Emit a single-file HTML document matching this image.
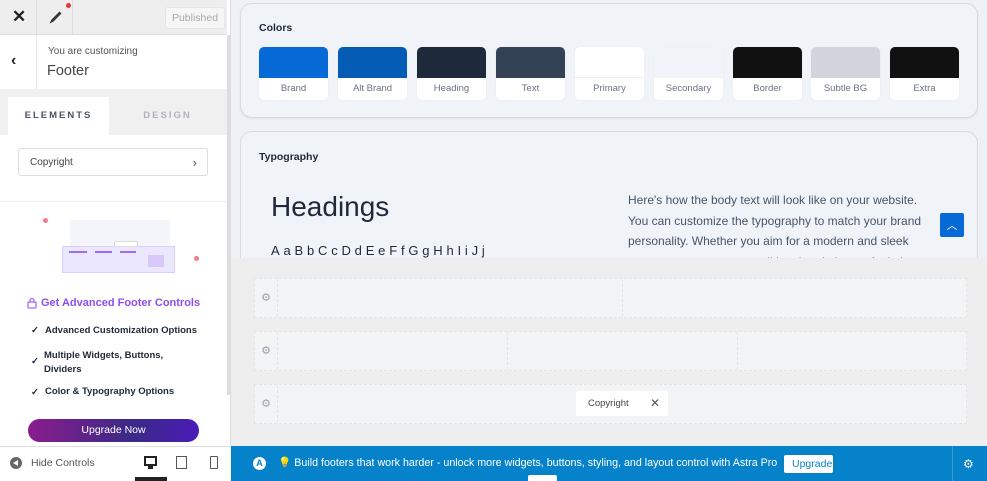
<!DOCTYPE html>
<html><head><style>
*{box-sizing:border-box;margin:0;padding:0}
body{width:987px;height:481px;overflow:hidden;font-family:"Liberation Sans",sans-serif;background:#eef1f5;position:relative}
.abs{position:absolute}
.sw{position:absolute;top:47px;width:69px;height:53px;background:#fff;border-radius:5px;overflow:hidden;box-shadow:0 0 1px rgba(0,0,0,.08)}
.sw div{height:31px}
.sw span{display:block;text-align:center;font-size:9.5px;color:#6b7280;line-height:22px}
.row{position:absolute;left:254px;width:713px;height:40px;background:#f3f4f6;border:1px dashed #e3e4e7}
.gear{position:absolute;left:0;top:0;width:23px;height:38px;border-right:1px dashed #e3e4e7;color:#9ca3af;font-size:11px;text-align:center;line-height:38px}
.chk{position:absolute;left:30px;font-size:9.5px;font-weight:bold;color:#1f2937;line-height:14px}
</style></head><body>
<div class="abs" style="left:0;top:0;width:231px;height:481px;background:#fff;border-right:1px solid #ddd"></div>
<div class="abs" style="left:0;top:0;width:227px;height:35px;background:#eeeeee;border-bottom:1px solid #ddd"></div>
<div class="abs" style="left:12px;top:7px;font-size:17px;color:#222;font-weight:bold">✕</div>
<div class="abs" style="left:36px;top:0;width:1px;height:35px;background:#ddd"></div>
<div class="abs" style="left:72px;top:0;width:1px;height:35px;background:#ddd"></div>
<svg class="abs" style="left:48px;top:9px" width="16" height="16" viewBox="0 0 16 16"><path d="M3 13l2-1 7-7-1-1-7 7z M11 3l2 2" stroke="#333" stroke-width="1.4" fill="none"/></svg>
<div class="abs" style="left:66px;top:3px;width:5px;height:5px;border-radius:50%;background:#e53935"></div>
<div class="abs" style="left:165px;top:7px;width:60px;height:22px;border:1px solid #e5e5e5;border-radius:3px;background:#f6f6f6;color:#a8a8a8;font-size:10.5px;text-align:center;line-height:20px">Published</div>
<div class="abs" style="left:36px;top:35px;width:1px;height:54px;background:#e5e5e5"></div>
<div class="abs" style="left:11px;top:52px;font-size:16px;font-weight:bold;color:#222">‹</div>
<div class="abs" style="left:48px;top:46px;font-size:10px;color:#555">You are customizing</div>
<div class="abs" style="left:47px;top:63px;font-size:14.5px;color:#444">Footer</div>
<div class="abs" style="left:0;top:89px;width:227px;height:46px;background:#f0f0f1"></div>
<div class="abs" style="left:8px;top:97px;width:101px;height:38px;background:#fff;text-align:center;line-height:38px;font-size:9.5px;letter-spacing:2px;font-weight:bold;color:#4b5563">ELEMENTS</div>
<div class="abs" style="left:110px;top:97px;width:115px;height:38px;text-align:center;line-height:38px;font-size:9.5px;letter-spacing:2px;font-weight:bold;color:#b0b4bb">DESIGN</div>
<div class="abs" style="left:18px;top:148px;width:190px;height:28px;border:1px solid #ddd;border-radius:3px;font-size:10px;color:#444;padding-left:11px;line-height:28px">Copyright<span style="position:absolute;right:10px;top:0;color:#555;font-size:13px">›</span></div>
<div class="abs" style="left:0;top:201px;width:227px;height:1px;background:#eee"></div>
<div class="abs" style="left:43px;top:218px;width:5px;height:5px;border-radius:50%;background:#f47d8b"></div>
<div class="abs" style="left:194px;top:256px;width:5px;height:5px;border-radius:50%;background:#f47d8b"></div>
<div class="abs" style="left:70px;top:220px;width:100px;height:30px;background:#f4f4fb"></div>
<div class="abs" style="left:62px;top:246px;width:113px;height:27px;background:#ebe7fd;border:1px solid #d7cffa"></div>
<div class="abs" style="left:69px;top:251px;width:18px;height:2px;background:#9d6cf0"></div>
<div class="abs" style="left:95px;top:251px;width:17px;height:2px;background:#9d6cf0"></div>
<div class="abs" style="left:120px;top:251px;width:16px;height:2px;background:#9d6cf0"></div>
<div class="abs" style="left:148px;top:255px;width:16px;height:12px;background:#d8c8fa"></div>
<div class="abs" style="left:114px;top:241px;width:24px;height:6px;background:#fff;border:1px solid #ddd"></div>
<svg class="abs" style="left:27px;top:297px" width="10" height="12" viewBox="0 0 10 12"><rect x="1" y="5" width="8" height="6" rx="1" fill="none" stroke="#a46af2" stroke-width="1.3"/><path d="M3 5V3.5a2 2 0 014 0V5" fill="none" stroke="#a46af2" stroke-width="1.3"/></svg>
<div class="abs" style="left:41px;top:297px;font-size:11px;color:#8e4ef0;font-weight:bold">Get Advanced Footer Controls</div>
<div class="chk" style="left:31px;top:324px">✓</div><div class="abs" style="left:45px;top:325px;font-size:9.5px;font-weight:bold;color:#1f2937">Advanced Customization Options</div>
<div class="chk" style="left:31px;top:355px">✓</div><div class="abs" style="left:44px;top:349px;font-size:9.5px;font-weight:bold;color:#1f2937;line-height:14px">Multiple Widgets, Buttons,<br>Dividers</div>
<div class="chk" style="left:31px;top:386px">✓</div><div class="abs" style="left:45px;top:386px;font-size:9.5px;font-weight:bold;color:#1f2937">Color &amp; Typography Options</div>
<div class="abs" style="left:28px;top:419px;width:171px;height:23px;border-radius:12px;background:linear-gradient(90deg,#8b1c8c,#3b2a86 60%,#4a1bb8);color:#fff;font-size:10.5px;text-align:center;line-height:23px">Upgrade Now</div>
<div class="abs" style="left:227px;top:35px;width:4px;height:360px;background:#ddd"></div>
<div class="abs" style="left:0;top:446px;width:231px;height:35px;background:#fff;border-top:1px solid #ddd"></div>
<div class="abs" style="left:10px;top:457px;width:12px;height:12px;border-radius:50%;background:#666"></div>
<div class="abs" style="left:13px;top:460px;width:0;height:0;border-top:3px solid transparent;border-bottom:3px solid transparent;border-right:5px solid #fff"></div>
<div class="abs" style="left:31px;top:457px;font-size:10.5px;color:#555">Hide Controls</div>
<div class="abs" style="left:144px;top:456px;width:13px;height:10px;border:2px solid #222"></div><div class="abs" style="left:148px;top:466px;width:5px;height:3px;background:#222"></div>
<div class="abs" style="left:176px;top:456px;width:11px;height:13px;border:1.5px solid #555"></div>
<div class="abs" style="left:210px;top:456px;width:8px;height:13px;border:1.5px solid #555;border-radius:1px"></div>
<div class="abs" style="left:135px;top:477px;width:32px;height:4px;background:#222"></div>
<div class="abs" style="left:240px;top:3px;width:738px;height:115px;border:1px solid #d6dbe1;border-radius:12px;background:#f0f4f8;box-shadow:0 1px 2px rgba(0,0,0,.06)"></div>
<div class="abs" style="left:259px;top:22px;font-size:10.5px;font-weight:bold;color:#1f2937">Colors</div>
<div class="sw" style="left:259px"><div style="background:#0769d6"></div><span>Brand</span></div>
<div class="sw" style="left:338px"><div style="background:#045cb4"></div><span>Alt Brand</span></div>
<div class="sw" style="left:417px"><div style="background:#1e293b"></div><span>Heading</span></div>
<div class="sw" style="left:496px"><div style="background:#334155"></div><span>Text</span></div>
<div class="sw" style="left:575px"><div style="background:#fff;border-bottom:1px solid #eee"></div><span>Primary</span></div>
<div class="sw" style="left:654px"><div style="background:#f0f4f8"></div><span>Secondary</span></div>
<div class="sw" style="left:733px"><div style="background:#111"></div><span>Border</span></div>
<div class="sw" style="left:811px"><div style="background:#d1d5db"></div><span>Subtle BG</span></div>
<div class="sw" style="left:890px"><div style="background:#111"></div><span>Extra</span></div>
<div class="abs" style="left:240px;top:131px;width:738px;height:160px;border:1px solid #d6dbe1;border-radius:12px;background:#f0f4f8"></div>
<div class="abs" style="left:259px;top:151px;font-size:10.5px;font-weight:bold;color:#1f2937">Typography</div>
<div class="abs" style="left:271px;top:191px;font-size:28px;color:#1e293b">Headings</div>
<div class="abs" style="left:271px;top:243px;font-size:13px;letter-spacing:3.8px;color:#1e293b">AaBbCcDdEeFfGgHhIiJj</div>
<div class="abs" style="left:628px;top:190px;width:308px;font-size:12px;line-height:20.5px;color:#475569">Here's how the body text will look like on your website. You can customize the typography to match your brand personality. Whether you aim for a modern and sleek appearance or a more traditional and elegant feel, the</div>
<div class="abs" style="left:940px;top:213px;width:24px;height:24px;background:#0769d6;border-radius:2px;color:#fff;text-align:center;line-height:26px;font-size:11px">︿</div>
<div class="abs" style="left:231px;top:258px;width:756px;height:188px;background:#eeeeee"></div>
<div class="row" style="top:278px"><div class="gear">⚙</div><div class="abs" style="left:367px;top:0;width:1px;height:38px;border-left:1px dashed #e3e4e7"></div></div>
<div class="row" style="top:331px"><div class="gear">⚙</div><div class="abs" style="left:252px;top:0;height:38px;border-left:1px dashed #e3e4e7"></div><div class="abs" style="left:482px;top:0;height:38px;border-left:1px dashed #e3e4e7"></div></div>
<div class="row" style="top:384px"><div class="gear">⚙</div></div>
<div class="abs" style="left:576px;top:391px;width:92px;height:25px;background:#fff;border-radius:2px;font-size:9.5px;color:#444;line-height:25px;padding-left:12px">Copyright<span style="position:absolute;right:8px;font-size:12px;color:#555">✕</span></div>
<div class="abs" style="left:231px;top:446px;width:756px;height:35px;background:#0582c9"></div>
<div class="abs" style="left:952px;top:446px;width:1px;height:35px;background:#3a9ad6"></div>
<div class="abs" style="left:253px;top:457px;width:13px;height:13px;border-radius:50%;background:#fff;color:#0582c9;font-size:9px;text-align:center;line-height:13px;font-weight:bold">A</div>
<div class="abs" style="left:278px;top:456px;font-size:10.7px;color:#fff"><span style="color:#f7d55c">💡</span> Build footers that work harder - unlock more widgets, buttons, styling, and layout control with Astra Pro</div>
<div class="abs" style="left:784px;top:455px;width:49px;height:18px;background:#fff;border-radius:2px;color:#0582c9;font-size:10.5px;line-height:18px;padding-left:8px">Upgrade</div>
<div class="abs" style="left:528px;top:475px;width:29px;height:6px;background:#fff;border-radius:2px 2px 0 0"></div>
<div class="abs" style="left:963px;top:457px;color:#fff;font-size:12px">⚙</div>
</body></html>
